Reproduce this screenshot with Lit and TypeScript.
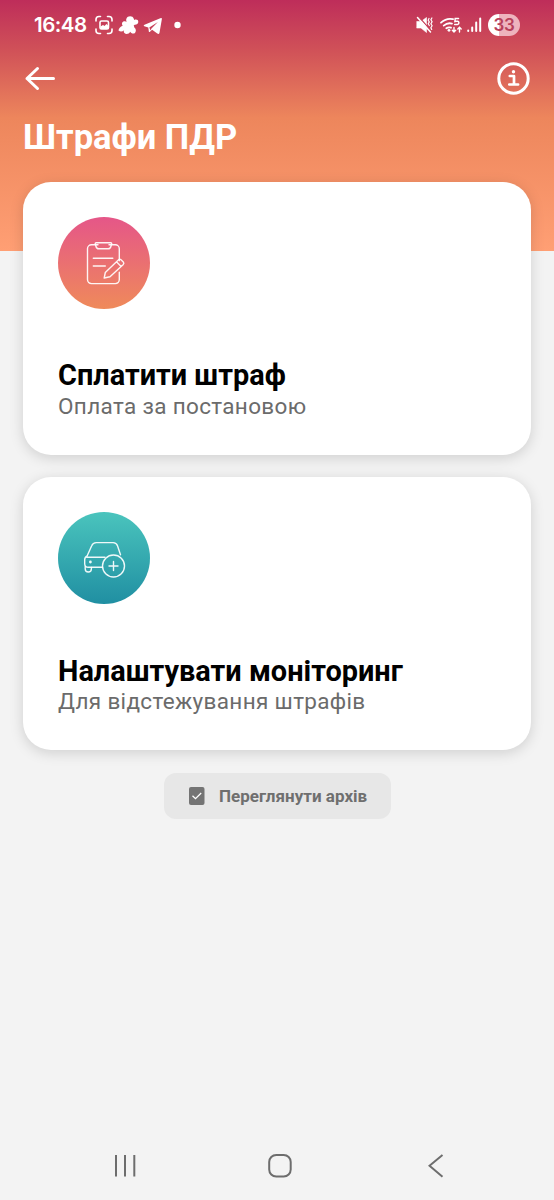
import { LitElement, html, css, svg } from "lit";
import { customElement, property } from "lit/decorators.js";

@customElement("status-bar")
class StatusBar extends LitElement {
  static styles = css`
    :host { display: flex; height: 50px; box-sizing: border-box; justify-content: space-between; align-items: center; padding: 0 34px 0 34px; color: #fff; }
    .group { display: flex; align-items: center; height: 50px; }
    .time { font: 600 20.5px/50px Inter, sans-serif; letter-spacing: -0.5px; width: 61px; white-space: nowrap; }
    svg { display: block; flex: none; }
    .battery { width: 32px; height: 22px; border-radius: 11px; background: linear-gradient(90deg, #fff 33%, #eeb3bd 33%); color: #b8405a; font: 600 17px/22px Inter, sans-serif; letter-spacing: -0.3px; text-align: center; margin-left: 5px; }
  `;
  render() {
    return html`
      <div class="group">
        <span class="time">16:48</span>
        <svg width="90" height="50" viewBox="95 0 90 50" fill="none" stroke="#fff" stroke-width="1.6" stroke-linecap="round">
          <path d="M96 21v-1.500q0-3 3-3h1.500M107.500 16.500h1.500q3 0 3 3V21M112 29v1.500q0 3-3 3h-1.500M100.500 33.500H99q-3 0-3-3V29"/>
          <rect x="100" y="21" width="8.500" height="8" rx="1.500"/>
          <path d="M100.500 28v-1.500l2.500-1.500 1.500 1 2-2 2 2V29h-8z" fill="#fff" stroke="none"/>
          <path d="M126.500 18.500c1-3 6.500-3 7.300.3l.4 1.200c2-1 4.300-.2 4.100 2-.2 1.900-1.700 2.800-3.600 2.700l-1 .8.800 2.200c1.700 1.200 1.800 3.500.5 5.200-1.500.9-3.800.8-4.800-1.200-1.200 2.300-4 3-5.800 1.400-.8-.9-.8-1.800-.2-2.800-2 1.500-4 1.500-5.700.3.200-2.600 1.800-3.800 4.200-4.900-1-1.500-1-3 .3-4 1.300-.8 2.500-.6 3.700 0-.7-1.200-.7-2.200-.2-3.200z" fill="#fff" stroke="none"/>
          <path d="M144.500 24.700L160.300 18.300q2-.7 1.500 1.200l-2.300 13.200q-.5 2-2.200.9l-5.200-3.900-2.400 2.200q-.8.500-.9-.7l-.5-3.600-4-1.300q-1.500-.8.200-1.600zm4.800 2.900l1.200 2.800 1-2 6.400-6.400z" fill="#fff" fill-rule="evenodd" stroke="none"/>
          <circle cx="177.500" cy="25" r="3.200" fill="#fff" stroke="none"/>
        </svg>
      </div>
      <div class="group">
        <svg width="67" height="50" viewBox="416 0 67 50" fill="none" stroke="#fff" stroke-width="1.700" stroke-linecap="round">
          <path d="M417 21.500h4l5.500-4v15l-5.500-4.500h-4z" fill="#fff" stroke="#fff" stroke-width=".6"/>
          <path d="M419 17l10 11.500" stroke="#c6415a" stroke-width="1.200"/>
          <path d="M417.500 17.500l13 14.500" stroke-width="1.500"/>
          <path d="M429 18.500l-.8 1.600 1.100 1.800-1.100 1.800 1.100 1.800M431.900 18l-1 1.800 1.200 2-1.200 2 1.200 2-1.200 2 .8 1.600" stroke-width="1.200"/>
          <path d="M441 22.700q5.500-5 12-3.500M443.700 25.600q3.800-3.200 8.300-2M446.300 28.300q2.300-1.600 4.700-.6" stroke-width="1.800"/>
          <circle cx="449" cy="30.300" r="1.400" fill="#fff" stroke="none"/>
          <path d="M458.500 18.500h-3.300l-.3 3q3.800-1 4 1.200 0 2.500-4.200 1.700" stroke-width="1.500"/>
          <path d="M454 27.500v4.500m-1.700-1.700L454 32l1.700-1.700M459.500 32v-4.800m-1.700 1.700l1.700-1.700 1.700 1.700" stroke-width="1.400"/>
          <path d="M468.200 30.500V31M472.200 27.500V31M476.200 22.500V31M480.200 18.500V31" stroke-width="2"/>
        </svg>
        <div class="battery">33</div>
      </div>`;
  }
}

const icons: Record<string, unknown> = {
  fine: svg`
    <path d="M40 27.800h-6.500a4 4 0 0 0-4 4v30.800a4 4 0 0 0 4 4h23.800a4 4 0 0 0 4-4V55.300M51 27.800h6.300a4 4 0 0 1 4 4v12"/>
    <path d="M38.200 25.700h14.500q1.300 0 .9 1.300l-.7 2.500q-.6 2.300-2.700 2.300h-9.500q-2.100 0-2.700-2.300l-.7-2.500q-.4-1.300.9-1.300z"/>
    <path d="M35.300 41.300h19.500M35.300 49h12"/>
    <path d="M47.300 55.500l13.300-12.800q1.200-1 2.400 0l2.300 2.300q1.100 1.200 0 2.400L52 59.700l-5.800 1.300zM58.500 44.800l4.600 4.600"/>`,
  car: svg`
    <path d="M44.500 55.300H30.200q-3.500 0-3.500-3.500v-4q0-3 2.500-4l4.500-10q1.200-3.200 4.500-3.200h17q3.200 0 4.300 3.200l3 9M28.500 45.300h18.500"/>
    <path d="M27.200 54.800v2q0 3.200 3.100 3.200t3.100-3.200v-1.300"/>
    <circle cx="32.400" cy="50" r=".7"/>
    <circle cx="55.500" cy="54" r="11"/>
    <path d="M55.500 49.500v9M51 54h9"/>`,
};

@customElement("service-card")
class ServiceCard extends LitElement {
  @property() kind = "fine";
  @property() heading = "";
  @property() note = "";
  static styles = css`
    :host { display: block; height: 272.600px; box-sizing: border-box; padding: 35px; border-radius: 28px; background: #fff; box-shadow: 0 3px 14px rgba(0, 0, 0, 0.15); white-space: nowrap; }
    .badge { width: 92px; height: 92px; border-radius: 50%; }
    .fine { background: linear-gradient(#e55688, #ef8a5a); }
    .car { background: linear-gradient(#4ac4bd, #208fa2); }
    svg { display: block; }
    .heading { margin-top: 49.400px; font-size: 28.900px; line-height: 34px; font-weight: 700; color: #000; }
    .note { margin-top: 0.400px; font-size: 22.500px; line-height: 26px; color: #6b6b6b; letter-spacing: 0.340px; }
  `;
  render() {
    return html`
      <div class="badge ${this.kind}">
        <svg width="92" height="92" viewBox="0 0 92 92" fill="none" stroke="#fff" stroke-opacity=".92" stroke-width="1.400" stroke-linecap="round" stroke-linejoin="round">${icons[this.kind]}</svg>
      </div>
      <div class="heading">${this.heading}</div>
      <div class="note">${this.note}</div>`;
  }
}

@customElement("app-root")
class AppRoot extends LitElement {
  static styles = css`
    :host { display: flex; flex-direction: column; height: 1200px; overflow: hidden; font-family: Roboto, sans-serif; background: linear-gradient(#be2d5a 0, #d05158 50px, #ed865c 118px, #ff9f74 251px, #f3f3f3 251px); }
    svg { display: block; flex: none; }
    .toolbar { display: flex; justify-content: space-between; align-items: center; height: 56px; padding: 0 24px; }
    .title { margin: 0; height: 76px; padding: 11px 23px 0; box-sizing: border-box; font-size: 34.500px; line-height: 40px; font-weight: 700; color: #fff; white-space: nowrap; }
    .cards { display: flex; flex-direction: column; gap: 22.600px; padding: 0 23px; }
    .archive { align-self: center; display: flex; align-items: center; gap: 14px; width: 227px; height: 46px; box-sizing: border-box; margin: 23.200px 0 0 1px; padding: 0 24px 0 25px; border: 0; border-radius: 12px; background: #e7e7e7; color: #6f6f6f; font: 700 17px/46px Roboto, sans-serif; letter-spacing: 0.020px; white-space: nowrap; }
    .nav { margin-top: auto; height: 69px; display: grid; grid-template-columns: 156px 160px 17px; align-items: center; padding: 0 0 0 112px; }
  `;
  render() {
    return html`
      <status-bar></status-bar>
      <div class="toolbar">
        <svg width="32" height="32" viewBox="0 0 32 32" fill="none" stroke="#fff" stroke-width="3" stroke-linecap="round" stroke-linejoin="round"><path d="M29.500 16.500H3M13.500 6.500L3 16.500l10.500 10"/></svg>
        <svg width="33" height="34" viewBox="0 0 33 34" fill="none" stroke="#fff" stroke-linejoin="round"><circle cx="16.500" cy="17.500" r="14.700" stroke-width="3"/><circle cx="16.500" cy="10.800" r="1.700" fill="#fff" stroke="none"/><path d="M12.800 15h4.200v8.500M12.300 23.500h8.800" stroke-width="2.700" stroke-linecap="round"/></svg>
      </div>
      <h1 class="title">Штрафи ПДР</h1>
      <div class="cards">
        <service-card kind="fine" heading="Сплатити штраф" note="Оплата за постановою"></service-card>
        <service-card kind="car" heading="Налаштувати моніторинг" note="Для відстежування штрафів"></service-card>
      </div>
      <button class="archive">
        <svg width="16" height="18" viewBox="0 0 16 18" fill="none"><rect width="15.500" height="18" rx="2" fill="#747474"/><path d="M3.500 8.700l3 3 5.700-5.700" stroke="#fff" stroke-width="1.300"/></svg>
        <span>Переглянути архів</span>
      </button>
      <div class="nav">
        <svg width="25" height="24" viewBox="0 0 25 24" stroke="#6d6d6d" stroke-width="2"><path d="M4 1v21.500M13 1v21.500M22.300 1v21.500"/></svg>
        <svg width="24" height="24" viewBox="0 0 24 24" fill="none" stroke="#6d6d6d" stroke-width="2"><rect x="1.200" y="1" width="21.500" height="21.500" rx="7"/></svg>
        <svg width="17" height="24" viewBox="0 0 17 24" fill="none" stroke="#6d6d6d" stroke-width="2"><path d="M14.500 1L1.500 11.700l13 11"/></svg>
      </div>`;
  }
}
